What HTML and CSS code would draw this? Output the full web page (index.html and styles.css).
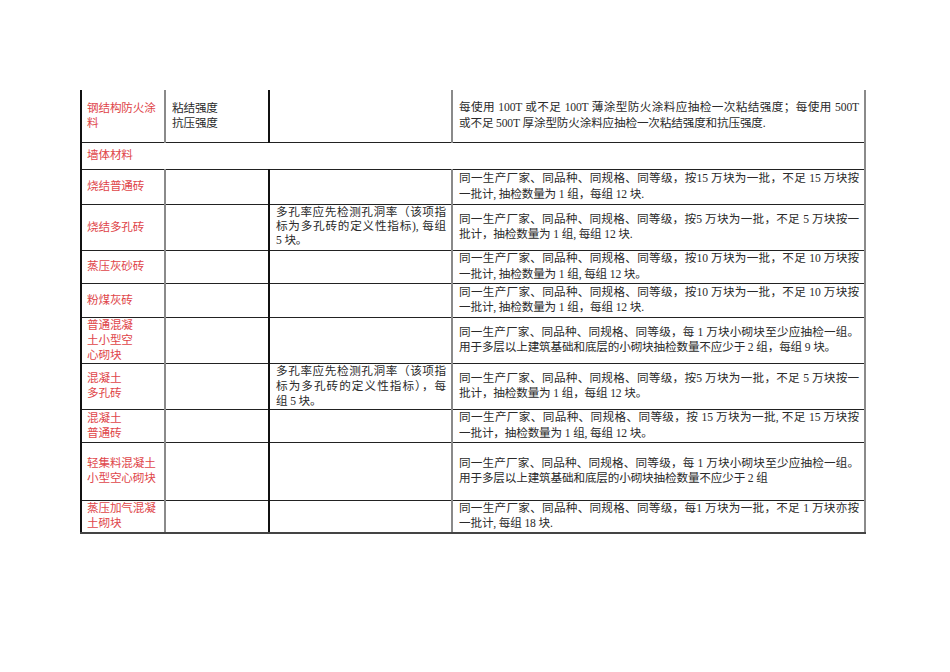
FILE: index.html
```html
<!DOCTYPE html>
<html lang="zh-CN">
<head>
<meta charset="utf-8">
<title>墙体材料检测</title>
<link rel="stylesheet" href="styles.css">
</head>
<body>
<div class="page">
<table class="spec">
<colgroup>
<col class="c-name"><col class="c-item"><col class="c-note"><col class="c-rule">
</colgroup>
<tbody>
<tr class="h52">
<td class="name">钢结构防火涂<br>料</td>
<td class="item">粘结强度<br>抗压强度</td>
<td class="note"></td>
<td class="rule"><span class="fill">每使用 100T 或不足 100T 薄涂型防火涂料应抽检一次粘结强度；每使用 500T</span><span class="last">或不足 500T 厚涂型防火涂料应抽检一次粘结强度和抗压强度.</span></td>
</tr>
<tr class="h27">
<td class="name group" colspan="4">墙体材料</td>
</tr>
<tr class="h35">
<td class="name">烧结普通砖</td>
<td class="item"></td>
<td class="note"></td>
<td class="rule"><span class="fill">同一生产厂家、同品种、同规格、同等级，按15 万块为一批，不足 15 万块按</span><span class="last">一批计, 抽检数量为 1 组，每组 12 块.</span></td>
</tr>
<tr class="h46">
<td class="name">烧结多孔砖</td>
<td class="item"></td>
<td class="note tight"><span class="fill">多孔率应先检测孔洞率（该项指</span><span class="fill">标为多孔砖的定义性指标), 每组</span><span class="last">5 块。</span></td>
<td class="rule"><span class="fill">同一生产厂家、同品种、同规格、同等级，按5 万块为一批，不足 5 万块按一</span><span class="last">批计，抽检数量为 1 组, 每组 12 块.</span></td>
</tr>
<tr class="h33">
<td class="name">蒸压灰砂砖</td>
<td class="item"></td>
<td class="note"></td>
<td class="rule"><span class="fill">同一生产厂家、同品种、同规格、同等级，按10 万块为一批，不足 10 万块按</span><span class="last">一批计, 抽检数量为 1 组, 每组 12 块。</span></td>
</tr>
<tr class="h34">
<td class="name">粉煤灰砖</td>
<td class="item"></td>
<td class="note"></td>
<td class="rule"><span class="fill">同一生产厂家、同品种、同规格、同等级，按10 万块为一批，不足 10 万块按</span><span class="last">一批计, 抽检数量为 1 组，每组 12 块.</span></td>
</tr>
<tr class="h45">
<td class="name">普通混凝<br>土小型空<br>心砌块</td>
<td class="item"></td>
<td class="note"></td>
<td class="rule"><span class="fill">同一生产厂家、同品种、同规格、同等级，每 1 万块小砌块至少应抽检一组。</span><span class="last">用于多层以上建筑基础和底层的小砌块抽检数量不应少于 2 组，每组 9 块。</span></td>
</tr>
<tr class="h46">
<td class="name">混凝土<br>多孔砖</td>
<td class="item"></td>
<td class="note"><span class="fill">多孔率应先检测孔洞率（该项指</span><span class="fill">标为多孔砖的定义性指标），每</span><span class="last">组 5 块。</span></td>
<td class="rule"><span class="fill">同一生产厂家、同品种、同规格、同等级，按5 万块为一批，不足 5 万块按一</span><span class="last">批计，抽检数量为 1 组，每组 12 块。</span></td>
</tr>
<tr class="h33">
<td class="name">混凝土<br>普通砖</td>
<td class="item"></td>
<td class="note"></td>
<td class="rule"><span class="fill">同一生产厂家、同品种、同规格、同等级，按 15 万块为一批, 不足 15 万块按</span><span class="last">一批计，抽检数量为 1 组, 每组 12 块。</span></td>
</tr>
<tr class="h58">
<td class="name">轻集料混凝土<br>小型空心砌块</td>
<td class="item"></td>
<td class="note"></td>
<td class="rule"><span class="fill">同一生产厂家、同品种、同规格、同等级，每 1 万块小砌块至少应抽检一组。</span><span class="last">用于多层以上建筑基础和底层的小砌块抽检数量不应少于 2 组</span></td>
</tr>
<tr class="h31">
<td class="name">蒸压加气混凝<br>土砌块</td>
<td class="item"></td>
<td class="note"></td>
<td class="rule"><span class="fill">同一生产厂家、同品种、同规格、同等级，每1 万块为一批，不足 1 万块亦按</span><span class="last">一批计, 每组 18 块.</span></td>
</tr>
</tbody>
</table>
</div>
</body>
</html>
```
FILE: styles.css
```css
html, body {
  margin: 0;
  padding: 0;
  background: #ffffff;
}

.page {
  padding: 90px 0 0 80px;
}

.spec {
  border-collapse: collapse;
  table-layout: fixed;
  width: 784px;
  font-family: "Liberation Serif", "Noto Sans CJK SC", serif;
  font-size: 11.6px;
  letter-spacing: -0.15px;
  line-height: 15px;
  color: #2a2a2a;
}

.c-name { width: 84px; }
.c-item { width: 104px; }
.c-note { width: 183px; }
.c-rule { width: 413px; }

.spec td {
  padding: 0 5px 0 6px;
  vertical-align: middle;
  overflow: hidden;
  border-top: 1px solid #222222;
  border-bottom: 1px solid #222222;
}

.spec tr:first-child td {
  border-top: none;
}

.spec tr:last-child td {
  border-bottom: 2px solid #444444;
}

.name {
  color: #e0464a;
  white-space: nowrap;
  border-left: 2px solid #111111;
}

.spec td.name {
  padding-left: 5px;
  padding-right: 2px;
}

.item {
  border-left: 2px solid #8a8a8a;
}

.note {
  border-left: 2px solid #111111;
}

.note.tight {
  line-height: 14px;
}

.rule {
  border-left: 2px solid #8a8a8a;
  border-right: 2px solid #8a8a8a;
  line-height: 15.5px;
}

.group {
  border-right: 2px solid #8a8a8a;
}

.fill,
.last {
  display: block;
  white-space: nowrap;
}

.fill {
  text-align: justify;
  text-align-last: justify;
  white-space: normal;
}

.h52 { height: 52px; }
.h27 { height: 27px; }
.h35 { height: 35px; }
.h46 { height: 46px; }
.h33 { height: 33px; }
.h34 { height: 34px; }
.h45 { height: 45px; }
.h58 { height: 58px; }
.h31 { height: 31px; }
```
